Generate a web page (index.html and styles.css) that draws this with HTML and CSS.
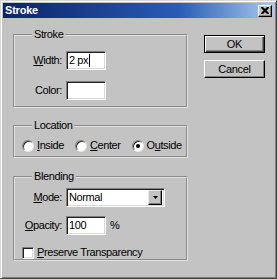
FILE: index.html
```html
<!DOCTYPE html>
<html>
<head>
<meta charset="utf-8">
<link rel="stylesheet" href="styles.css">
</head>
<body>
<div class="win">
  <div class="titlebar">
    <span class="title">Stroke</span>
    <span class="close"><svg width="8" height="7" viewBox="0 0 8 7"><path d="M0 0h2l2 2 2-2h2v1l-2.5 2.5L8 6v1H6L4 5 2 7H0V6l2.5-2.5L0 1z" fill="#000"/></svg></span>
  </div>
  <div class="client">
    <div class="left">
      <fieldset class="group g-stroke">
        <legend>Stroke</legend>
        <div class="form">
          <label class="lbl"><u>W</u>idth:</label>
          <div class="field w40"><span class="val">2 px</span><span class="caret"></span></div>
          <label class="lbl">Color:</label>
          <div class="field w40"></div>
        </div>
      </fieldset>
      <fieldset class="group g-loc">
        <legend>Location</legend>
        <div class="radios">
          <span class="opt"><span class="radio"></span><span><u>I</u>nside</span></span>
          <span class="opt"><span class="radio"></span><span><u>C</u>enter</span></span>
          <span class="opt"><span class="radio on"></span><span>O<u>u</u>tside</span></span>
        </div>
      </fieldset>
      <fieldset class="group g-blend">
        <legend>Blending</legend>
        <div class="form blend">
          <label class="lbl"><u>M</u>ode:</label>
          <div class="field select"><span class="val">Normal</span><span class="drop"><svg width="5" height="3" viewBox="0 0 5 3"><path d="M0 0h5L2.5 3z" fill="#000"/></svg></span></div>
          <label class="lbl"><u>O</u>pacity:</label>
          <div class="pct"><div class="field w40"><span class="val">100</span></div><span class="unit">%</span></div>
        </div>
        <div class="check"><span class="box"></span><span><u>P</u>reserve Transparency</span></div>
      </fieldset>
    </div>
    <div class="right">
      <button class="btn default"><span>OK</span></button>
      <button class="btn"><span>Cancel</span></button>
    </div>
  </div>
</div>
</body>
</html>
```
FILE: styles.css
```css
html, body { margin: 0; padding: 0; }
body {
  width: 277px; height: 279px; overflow: hidden;
  font-family: "Liberation Sans", Arial, sans-serif;
  font-size: 11px; color: #000; background: #c3c3c3;
}
.win {
  box-sizing: border-box;
  width: 277px; height: 279px;
  background: #c3c3c3;
  border-style: solid; border-width: 1px;
  border-color: #d8d8d8 #404040 #404040 #d8d8d8;
  padding: 2px;
  box-shadow: inset 1px 1px 0 #fff, inset -1px -1px 0 #808080;
}
.titlebar {
  height: 15px;
  background: linear-gradient(to right, #0a246a, #2a5cb4 65%, #a6caf0);
  display: flex; align-items: center; justify-content: space-between;
  padding: 0 2px 0 2px;
}
.title {
  color: #fff; font-weight: bold; font-size: 11px; letter-spacing: -0.2px;
  line-height: 13px;
}
.close {
  box-sizing: border-box;
  width: 14px; height: 12px;
  background: #c3c3c3;
  border-style: solid; border-width: 1px;
  border-color: #fff #000 #000 #fff;
  box-shadow: inset -1px -1px 0 #808080;
  display: flex; align-items: center; justify-content: center;
  padding-bottom: 1px;
}
.client {
  display: flex; align-items: flex-start;
  padding: 10px 0 0 10px;
  gap: 16px;
}
.left { width: 175px; display: flex; flex-direction: column; }
.group {
  margin: 0; min-width: 0;
  border: 2px groove #e0e0e0;
  padding: 0 6px 0 7px;
  letter-spacing: -0.4px;
}
.group legend {
  margin-left: 10px; padding: 0 2px;
  line-height: 13px; font-size: 11px;
}
.g-stroke { padding-top: 10px; padding-bottom: 6px; }
.g-loc { margin-top: 11px; padding-top: 7px; padding-bottom: 4px; }
.g-blend { margin-top: 12px; padding-top: 5px; padding-bottom: 0; }
.form {
  display: grid;
  grid-template-columns: 40px auto;
  column-gap: 4px; row-gap: 11px;
  align-items: center; justify-items: start;
}
.form.blend { row-gap: 9px; }
.lbl { justify-self: end; line-height: 13px; }
.field {
  box-sizing: border-box; height: 19px;
  background: #fff;
  border-style: solid; border-width: 1px;
  border-color: #808080 #fff #fff #808080;
  box-shadow: inset 1px 1px 0 #202020, inset -1px -1px 0 #d8d8d8;
  display: flex; align-items: center;
  padding-left: 2px;
}
.w40 { width: 40px; }
.val { line-height: 13px; }
.caret { width: 1px; height: 13px; background: #000; margin-left: 1px; }
.select { width: 99px; justify-content: space-between; padding-right: 2px; height: 19px; }
.drop {
  box-sizing: border-box;
  width: 14px; height: 15px;
  background: #c3c3c3;
  border-style: solid; border-width: 1px;
  border-color: #e8e8e8 #000 #000 #e8e8e8;
  box-shadow: inset -1px -1px 0 #808080;
  display: flex; align-items: center; justify-content: center;
}
.pct { display: flex; align-items: center; gap: 4px; }
.unit { line-height: 13px; }
.radios { display: flex; align-items: center; gap: 11px; }
.opt { display: flex; align-items: center; gap: 3px; line-height: 13px; }
.radio {
  box-sizing: border-box;
  width: 12px; height: 12px; border-radius: 50%;
  background: #fff;
  border: 1px solid; border-color: #808080 #e8e8e8 #e8e8e8 #808080;
  box-shadow: inset 1px 1px 0 #303030;
  position: relative;
}
.radio.on::after {
  content: ""; position: absolute; left: 3px; top: 3px;
  width: 4px; height: 4px; border-radius: 50%; background: #000;
}
.check { display: flex; align-items: center; gap: 3px; margin-top: 11px; line-height: 13px; }
.box {
  box-sizing: border-box; width: 12px; height: 12px;
  background: #fff;
  border: 1px solid; border-color: #808080 #fff #fff #808080;
  box-shadow: inset 1px 1px 0 #202020, inset -1px -1px 0 #d8d8d8;
}
.right { display: flex; flex-direction: column; gap: 7px; padding-top: 7px; }
.btn {
  box-sizing: border-box;
  width: 61px; height: 18px; margin: 0; padding: 0;
  font-family: "Liberation Sans", Arial, sans-serif; font-size: 11px; color: #000;
  letter-spacing: -0.3px;
  background: #c3c3c3;
  border-style: solid; border-width: 1px;
  border-color: #fff #000 #000 #fff;
  box-shadow: inset -1px -1px 0 #808080;
}
.btn.default {
  border: 1px solid #000;
  box-shadow: inset 1px 1px 0 #fff, inset -1px -1px 0 #404040, inset -2px -2px 0 #808080;
}
```
